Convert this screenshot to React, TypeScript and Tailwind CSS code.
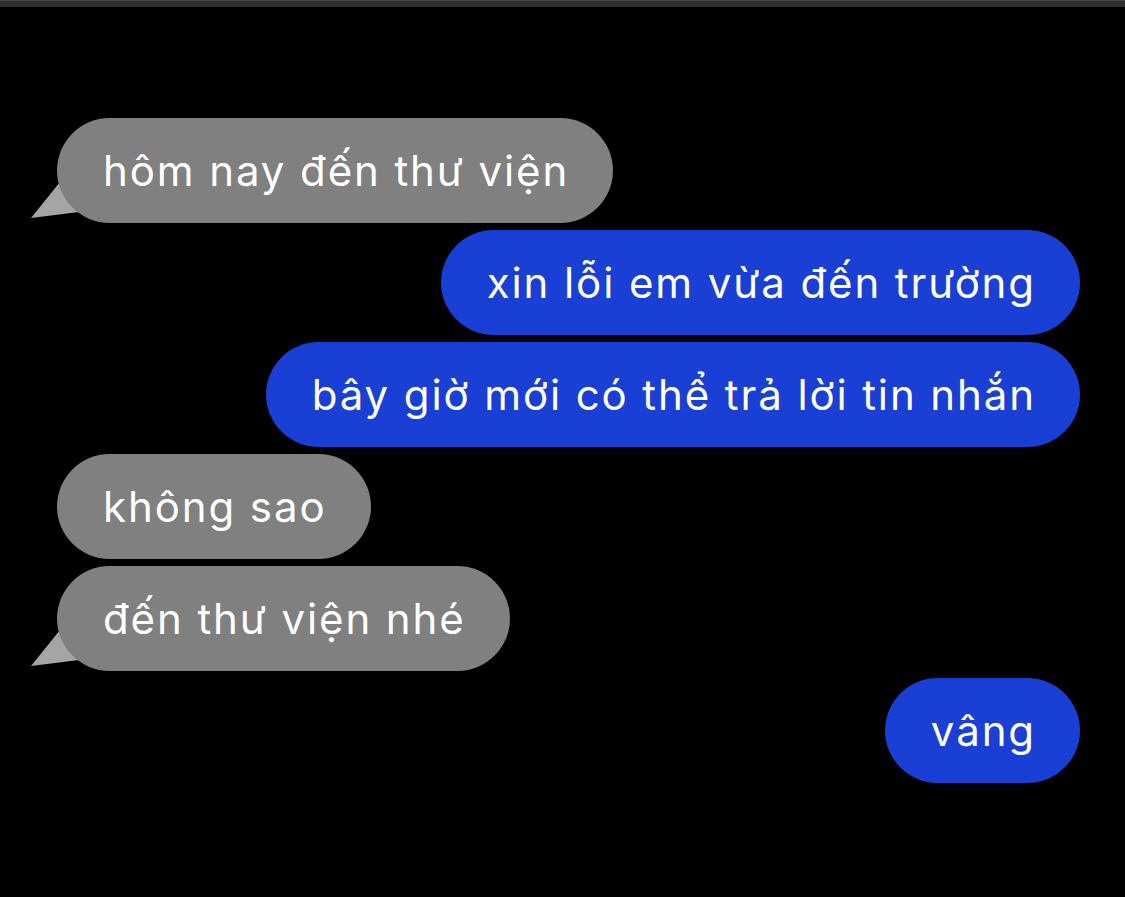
const messages: { text: string; mine: boolean; tail?: boolean }[] = [
  { text: "hôm nay đến thư viện", mine: false, tail: true },
  { text: "xin lỗi em vừa đến trường", mine: true },
  { text: "bây giờ mới có thể trả lời tin nhắn", mine: true },
  { text: "không sao", mine: false },
  { text: "đến thư viện nhé", mine: false, tail: true },
  { text: "vâng", mine: true },
];

function Tail() {
  return (
    <svg
      className="absolute left-[-28px] bottom-0"
      width="60"
      height="45"
      viewBox="0 0 60 45"
    >
      <polygon points="2,40 31,4 50,34" fill="#a5a5a5" />
    </svg>
  );
}

export default function App() {
  return (
    <div className="w-[1125px] h-[897px] bg-black overflow-hidden font-['Inter','Noto_Sans',sans-serif]">
      <div className="h-[7px] bg-[#2f2f2f] border-t border-[#4a4a4a]" />
      <div className="flex flex-col gap-[7px] pl-[57px] pr-[45px] pt-[111px]">
        {messages.map((m, i) => (
          <div key={i} className={m.mine ? "flex justify-end" : "flex justify-start"}>
            <div className="relative">
              {m.tail && <Tail />}
              <div
                className={
                  "relative h-[105px] rounded-full pl-[46px] pr-[44px] flex items-center text-white text-[42px] tracking-[1.9px] leading-none whitespace-nowrap " +
                  (m.mine ? "bg-[#1a3fd4]" : "bg-[#808080]")
                }
              >
                {m.text}
              </div>
            </div>
          </div>
        ))}
      </div>
    </div>
  );
}
